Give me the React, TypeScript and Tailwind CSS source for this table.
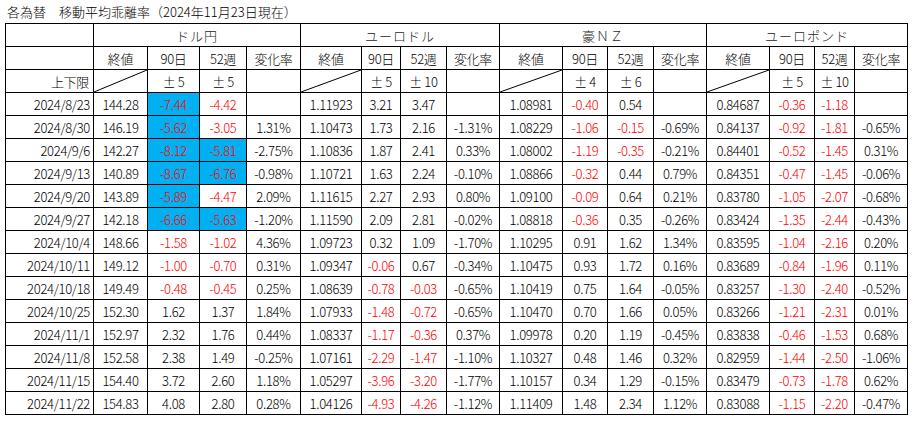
import React from "react";

type Group = { name: string; limits: [string, string]; th: [number, number] };

const groups: Group[] = [
  { name: "ドル円", limits: ["±\u20095", "±\u20095"], th: [5, 5] },
  { name: "ユーロドル", limits: ["±\u20095", "±\u200910"], th: [5, 10] },
  { name: "豪ＮＺ", limits: ["±\u20094", "±\u20096"], th: [4, 6] },
  { name: "ユーロポンド", limits: ["±\u20095", "±\u200910"], th: [5, 10] },
];

// column widths between grid lines
const widths = [88, 54, 52, 47, 54, 61, 39, 46, 53, 63, 45, 46, 53, 63, 45, 40, 53];

const rows: [string, string[]][] = [
  ["2024/8/23", ["144.28", "-7.44", "-4.42", "", "1.11923", "3.21", "3.47", "", "1.08981", "-0.40", "0.54", "", "0.84687", "-0.36", "-1.18", ""]],
  ["2024/8/30", ["146.19", "-5.62", "-3.05", "1.31%", "1.10473", "1.73", "2.16", "-1.31%", "1.08229", "-1.06", "-0.15", "-0.69%", "0.84137", "-0.92", "-1.81", "-0.65%"]],
  ["2024/9/6", ["142.27", "-8.12", "-5.81", "-2.75%", "1.10836", "1.87", "2.41", "0.33%", "1.08002", "-1.19", "-0.35", "-0.21%", "0.84401", "-0.52", "-1.45", "0.31%"]],
  ["2024/9/13", ["140.89", "-8.67", "-6.76", "-0.98%", "1.10721", "1.63", "2.24", "-0.10%", "1.08866", "-0.32", "0.44", "0.79%", "0.84351", "-0.47", "-1.45", "-0.06%"]],
  ["2024/9/20", ["143.89", "-5.89", "-4.47", "2.09%", "1.11615", "2.27", "2.93", "0.80%", "1.09100", "-0.09", "0.64", "0.21%", "0.83780", "-1.05", "-2.07", "-0.68%"]],
  ["2024/9/27", ["142.18", "-6.66", "-5.63", "-1.20%", "1.11590", "2.09", "2.81", "-0.02%", "1.08818", "-0.36", "0.35", "-0.26%", "0.83424", "-1.35", "-2.44", "-0.43%"]],
  ["2024/10/4", ["148.66", "-1.58", "-1.02", "4.36%", "1.09723", "0.32", "1.09", "-1.70%", "1.10295", "0.91", "1.62", "1.34%", "0.83595", "-1.04", "-2.16", "0.20%"]],
  ["2024/10/11", ["149.12", "-1.00", "-0.70", "0.31%", "1.09347", "-0.06", "0.67", "-0.34%", "1.10475", "0.93", "1.72", "0.16%", "0.83689", "-0.84", "-1.96", "0.11%"]],
  ["2024/10/18", ["149.49", "-0.48", "-0.45", "0.25%", "1.08639", "-0.78", "-0.03", "-0.65%", "1.10419", "0.75", "1.64", "-0.05%", "0.83257", "-1.30", "-2.40", "-0.52%"]],
  ["2024/10/25", ["152.30", "1.62", "1.37", "1.84%", "1.07933", "-1.48", "-0.72", "-0.65%", "1.10470", "0.70", "1.66", "0.05%", "0.83266", "-1.21", "-2.31", "0.01%"]],
  ["2024/11/1", ["152.97", "2.32", "1.76", "0.44%", "1.08337", "-1.17", "-0.36", "0.37%", "1.09978", "0.20", "1.19", "-0.45%", "0.83838", "-0.46", "-1.53", "0.68%"]],
  ["2024/11/8", ["152.58", "2.38", "1.49", "-0.25%", "1.07161", "-2.29", "-1.47", "-1.10%", "1.10327", "0.48", "1.46", "0.32%", "0.82959", "-1.44", "-2.50", "-1.06%"]],
  ["2024/11/15", ["154.40", "3.72", "2.60", "1.18%", "1.05297", "-3.96", "-3.20", "-1.77%", "1.10157", "0.34", "1.29", "-0.15%", "0.83479", "-0.73", "-1.78", "0.62%"]],
  ["2024/11/22", ["154.83", "4.08", "2.80", "0.28%", "1.04126", "-4.93", "-4.26", "-1.12%", "1.11409", "1.48", "2.34", "1.12%", "0.83088", "-1.15", "-2.20", "-0.47%"]],
];

const td = "border border-black p-0 text-center align-middle";

const Diagonal = () => (
  <td className={`${td} relative`}>
    <svg className="absolute inset-0 w-full h-full" preserveAspectRatio="none" viewBox="0 0 100 100">
      <line x1="0" y1="100" x2="100" y2="0" stroke="#000" strokeWidth="1" vectorEffect="non-scaling-stroke" />
    </svg>
  </td>
);

export default function App() {
  return (
    <div
      className="bg-white w-[914px] h-[421px] text-[13px] font-light text-black tracking-[-0.3px]"
      style={{ fontFamily: '"Noto Sans CJK JP", "Noto Sans", sans-serif' }}
    >
      <div className="h-[23px] pl-[7px] leading-[23px] tracking-normal">各為替　移動平均乖離率（2024年11月23日現在）</div>
      <table className="ml-[5px] border-collapse table-fixed w-[903px] leading-none">
        <colgroup>
          {widths.map((w, i) => (
            <col key={i} style={{ width: w }} />
          ))}
        </colgroup>
        <tbody>
          <tr className="h-[23px]">
            <td className={td}></td>
            {groups.map((g) => (
              <td key={g.name} colSpan={4} className={`${td} text-[#262626] tracking-[1px]`}>
                {g.name}
              </td>
            ))}
          </tr>
          <tr className="h-[23px]">
            <td className={td}></td>
            {groups.map((g) => (
              <React.Fragment key={g.name}>
                <td className={td}>終値</td>
                <td className={td}>90日</td>
                <td className={td}>52週</td>
                <td className={td}>変化率</td>
              </React.Fragment>
            ))}
          </tr>
          <tr className="h-[23px]">
            <td className={`${td} text-right pr-[4px]`}>上下限</td>
            {groups.map((g) => (
              <React.Fragment key={g.name}>
                <Diagonal />
                <td className={td}>{g.limits[0]}</td>
                <td className={td}>{g.limits[1]}</td>
                <td className={td}></td>
              </React.Fragment>
            ))}
          </tr>
          {rows.map(([date, vals]) => (
            <tr key={date} className="h-[23px]">
              <td className={`${td} text-right pr-[3px]`}>{date}</td>
              {vals.map((v, i) => {
                const gi = Math.floor(i / 4);
                const k = i % 4;
                const isDev = k === 1 || k === 2;
                const neg = isDev && v.startsWith("-");
                const hit = isDev && v !== "" && Math.abs(parseFloat(v)) >= groups[gi].th[k - 1];
                return (
                  <td
                    key={i}
                    className={`${td} ${neg ? "text-[#ff0000]" : ""} ${hit ? "bg-[#00b0f0]" : ""}`}
                  >
                    {v}
                  </td>
                );
              })}
            </tr>
          ))}
        </tbody>
      </table>
    </div>
  );
}
